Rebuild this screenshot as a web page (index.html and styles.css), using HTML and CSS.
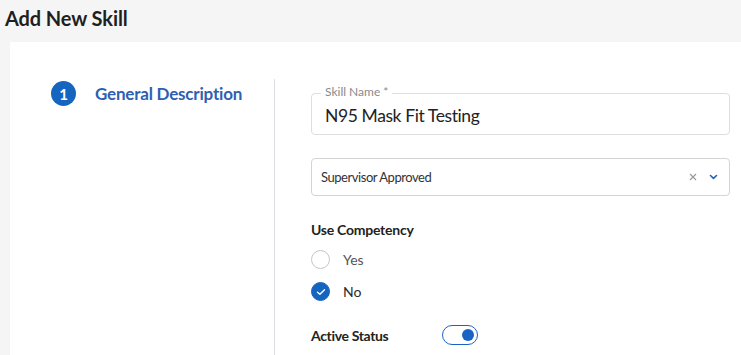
FILE: index.html
```html
<!DOCTYPE html>
<html>
<head>
<meta charset="utf-8">
<link rel="stylesheet" href="styles.css">
</head>
<body>
<div class="page">
  <header class="head"><h1 class="title">Add New Skill</h1></header>
  <main class="card">
    <aside class="steps">
      <div class="step">
        <span class="step-num">1</span>
        <span class="step-label">General Description</span>
      </div>
    </aside>
    <section class="form">
      <div class="outlined">
        <span class="float-label">Skill Name *</span>
        <span class="value">N95 Mask Fit Testing</span>
      </div>
      <div class="select">
        <span class="select-value">Supervisor Approved</span>
        <span class="select-icons">
          <svg class="clear" width="8" height="8" viewBox="0 0 8 8"><path d="M1 1L7 7M7 1L1 7" stroke="#9a9a9a" stroke-width="1.2" fill="none"/></svg>
          <svg class="chev" width="9" height="6" viewBox="0 0 9 6"><path d="M1.5 1.5L4.5 4.3L7.5 1.5" stroke="#2a5fb8" stroke-width="1.6" fill="none" stroke-linecap="round" stroke-linejoin="round"/></svg>
        </span>
      </div>
      <div class="group-label">Use Competency</div>
      <div class="radios">
        <label class="radio"><span class="dot"></span><span class="radio-text">Yes</span></label>
        <label class="radio checked"><span class="dot"><svg width="10" height="8" viewBox="0 0 10 8"><path d="M1.5 4.2L3.9 6.3L8.5 1.7" stroke="#fff" stroke-width="1.4" fill="none" stroke-linecap="round" stroke-linejoin="round"/></svg></span><span class="radio-text">No</span></label>
      </div>
      <div class="status-row">
        <span class="group-label inline">Active Status</span>
        <span class="toggle"><span class="knob"></span></span>
      </div>
    </section>
  </main>
</div>
</body>
</html>
```
FILE: styles.css
```css
* { box-sizing: border-box; }
html, body { margin: 0; padding: 0; }
body {
  background: #f5f5f5;
  font-family: Lato, "Open Sans", sans-serif;
  color: #222;
  width: 741px;
  height: 355px;
  overflow: hidden;
}
.page { display: flex; flex-direction: column; height: 355px; }
.head { height: 42px; display: flex; align-items: center; padding: 0 0 6px 5px; }
.title { margin: 0; font-size: 20px; font-weight: 700; color: #1f1f1f; letter-spacing: -0.1px; }
.card {
  flex: 1;
  margin-left: 10px;
  background: #fff;
  display: flex;
}
.steps {
  width: 264px;
  padding: 39px 0 0 41px;
}
.step { display: flex; align-items: center; gap: 19px; }
.step-num {
  width: 25px; height: 25px; border-radius: 50%;
  background: #1565c0; color: #fff;
  display: flex; align-items: center; justify-content: center;
  font-weight: 700; font-size: 15px;
}
.step-label { color: #2d5fb3; font-size: 17px; font-weight: 700; letter-spacing: -0.2px; }
.form {
  flex: 1;
  margin-top: 37px;
  border-left: 1px solid #dcdde3;
  padding: 14px 11px 0 36px;
  display: flex; flex-direction: column;
}
.outlined {
  position: relative;
  height: 42px;
  border: 1px solid #dedede;
  border-radius: 4px;
  display: flex; align-items: center;
  padding-left: 13px;
}
.float-label {
  position: absolute; top: -9px; left: 9px;
  background: #fff; padding: 0 4px;
  font-size: 12px; color: #8a8a8a; line-height: 14px;
}
.value { font-size: 17.5px; color: #222; padding-top: 2px; letter-spacing: -0.4px; }
.select {
  margin-top: 23px;
  height: 38px;
  border: 1px solid #d4d4d4;
  border-radius: 4px;
  display: flex; align-items: center; justify-content: space-between;
  padding: 0 10px 0 9px;
}
.select-value { font-size: 13px; color: #333; letter-spacing: -0.45px; }
.select-icons { display: flex; align-items: center; gap: 12px; padding-right: 1px; }
.group-label { margin-top: 25px; font-size: 14px; font-weight: 700; color: #222; letter-spacing: -0.25px; }
.radios { display: flex; flex-direction: column; gap: 13px; margin-top: 12px; }
.radio { display: flex; align-items: center; gap: 13px; }
.dot {
  width: 19px; height: 19px; border-radius: 50%;
  border: 1px solid #c6c6c6;
  display: flex; align-items: center; justify-content: center;
}
.checked .dot { background: #1565c0; border-color: #1565c0; }
.radio-text { font-size: 14px; color: #555; }
.checked .radio-text { color: #2a2a2a; }
.status-row { display: flex; align-items: center; margin-top: 24px; gap: 54px; }
.status-row .inline { margin-top: 0; letter-spacing: -0.35px; }
.toggle {
  width: 36px; height: 20px; border-radius: 10px;
  border: 1.5px solid #1a63c4;
  display: flex; align-items: center; justify-content: flex-end;
  padding-right: 3px;
}
.knob { width: 12px; height: 12px; border-radius: 50%; background: #1a63c4; }
```
